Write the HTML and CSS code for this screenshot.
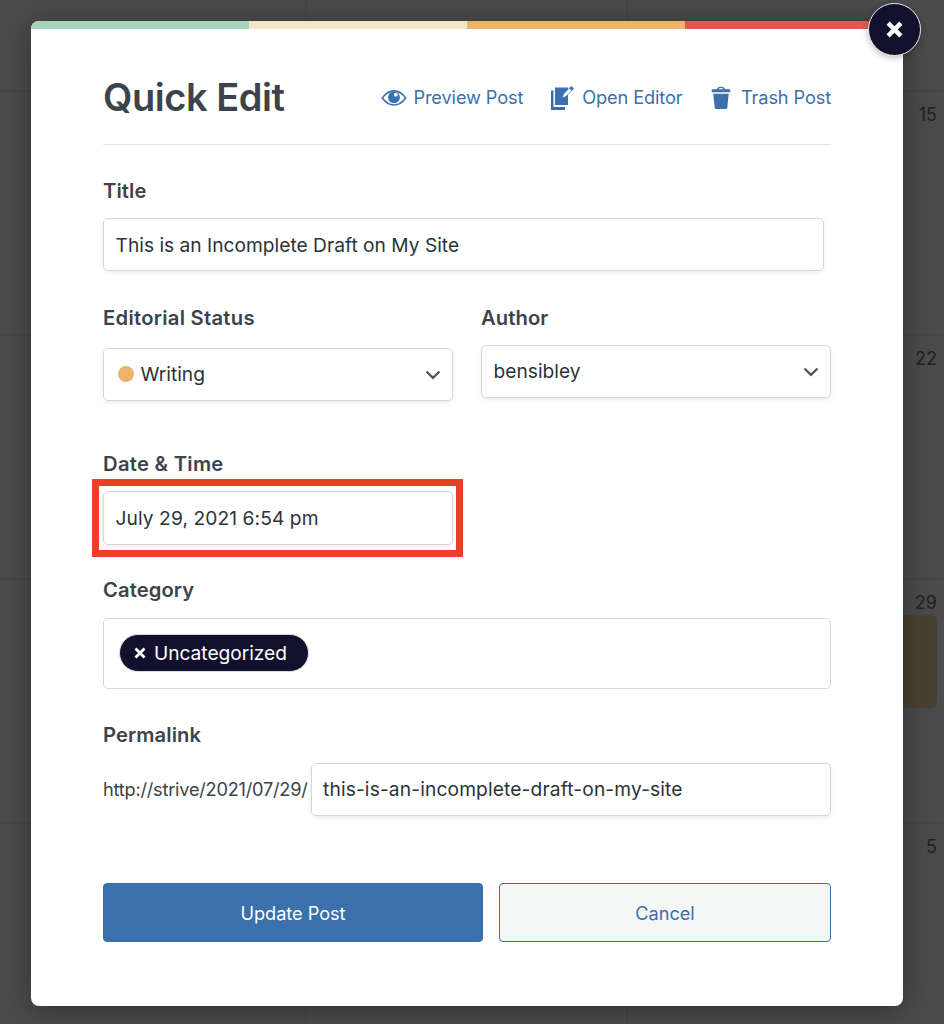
FILE: index.html
```html
<!DOCTYPE html>
<html lang="en">
<head>
<meta charset="utf-8">
<title>Quick Edit</title>
<link rel="stylesheet" href="styles.css">
</head>
<body>
<div class="screen">
  <div class="calendar">
    <div class="day"></div><div class="day"></div><div class="day"></div>
    <div class="day"></div><div class="day"></div><div class="day"><span class="date">15</span></div>
    <div class="day"></div><div class="day"></div><div class="day"><span class="date">22</span></div>
    <div class="day"></div><div class="day"></div><div class="day"><span class="date">29</span><div class="event"></div></div>
    <div class="day"></div><div class="day"></div><div class="day"><span class="date">5</span></div>
  </div>
  <main class="modal">
    <div class="stripes"><i class="green"></i><i class="cream"></i><i class="orange"></i><i class="red"></i></div>
    <button class="close" aria-label="Close"><svg width="17" height="17" viewBox="0 0 16 16"><path d="M2 2 14 14M14 2 2 14" stroke="#fff" stroke-width="4.200"/></svg></button>
    <div class="content">
      <header class="header">
        <h1 class="heading">Quick Edit</h1>
        <nav class="links">
          <a class="link preview"><svg width="26" height="18" viewBox="0 0 26 18"><path d="M1.300 9Q6.500 1.900 13 1.900T24.700 9Q19.500 16 13 16T1.300 9Z" fill="none" stroke="currentColor" stroke-width="1.600"/><circle cx="13" cy="8.300" r="5.900" fill="currentColor"/><circle cx="14.800" cy="5.700" r="1.900" fill="#fff"/></svg><span class="t-preview">Preview Post</span></a>
          <a class="link editor"><svg width="24" height="24" viewBox="0 0 24 24"><path d="M1 4.500H3.500V21H15V24H1Z" fill="currentColor"/><path d="M5 1.500H18V19H5Z" fill="currentColor"/><path d="M18.300 1.500 20.800 3.500V9L18.300 11Z" fill="#fff"/><path d="M13.300 10.800 14.500 7.500 21.400.8 23.200 2.600 16.500 9.500Z" fill="currentColor" stroke="currentColor" stroke-width="1.200" stroke-linejoin="round"/><path d="M12.600 11.600 13.900 7.900 19.400 2.600 21.500 4.700 16.100 10.100Z" fill="#fff"/></svg><span class="t-editor">Open Editor</span></a>
          <a class="link trash"><svg width="20" height="24" viewBox="0 0 20 24"><path d="M6.300 4Q6.800 1.400 10 1.400T13.700 4" fill="none" stroke="currentColor" stroke-width="1.400"/><path d="M.8 3.300H19.200V6.200H.8ZM2.300 7.700H17.700L16.300 21.500Q16.200 23 14.700 23H5.300Q3.800 23 3.700 21.500Z" fill="currentColor"/></svg><span class="t-trash">Trash Post</span></a>
        </nav>
      </header>
      <section class="field title">
        <label class="label l-title">Title</label>
        <div class="control short"><span class="t-title">This is an Incomplete Draft on My Site</span></div>
      </section>
      <div class="columns">
        <section class="field status">
          <label class="label l-status">Editorial Status</label>
          <div class="control"><i class="dot"></i><span class="t-writing">Writing</span><svg class="chevron" width="16" height="10" viewBox="0 0 16 10"><path d="m1.500 1.500 6.500 6.400 6.500-6.400" fill="none" stroke="#50575e" stroke-width="2.300"/></svg></div>
        </section>
        <section class="field">
          <label class="label l-author">Author</label>
          <div class="control"><span class="t-author">bensibley</span><svg class="chevron" width="16" height="10" viewBox="0 0 16 10"><path d="m1.500 1.500 6.500 6.400 6.500-6.400" fill="none" stroke="#50575e" stroke-width="2.300"/></svg></div>
        </section>
      </div>
      <section class="field datetime">
        <label class="label l-date">Date &amp; Time</label>
        <div class="control highlighted"><span class="t-date">July 29, 2021 6:54 pm</span></div>
      </section>
      <section class="field category">
        <label class="label l-category">Category</label>
        <div class="tags"><span class="tag"><svg width="12" height="12" viewBox="0 0 12 12"><path d="m1.500 1.500 9 9M10.500 1.500l-9 9" stroke="#fff" stroke-width="2.800"/></svg><span class="t-tag">Uncategorized</span></span></div>
      </section>
      <section class="field permalink">
        <label class="label l-permalink">Permalink</label>
        <div class="slug"><span class="base">http://strive/2021/07/29/</span><div class="control"><span class="t-slug">this-is-an-incomplete-draft-on-my-site</span></div></div>
      </section>
      <footer class="actions">
        <button class="button primary"><span class="t-update">Update Post</span></button>
        <button class="button secondary"><span class="t-cancel">Cancel</span></button>
      </footer>
    </div>
  </main>
</div>
</body>
</html>
```
FILE: styles.css
```css
* { box-sizing: border-box; }
body { margin: 0; font-family: Inter, "Liberation Sans", sans-serif; color: #3c434a; }
button { font: inherit; }
svg { display: block; flex: none; }
.screen { display: grid; width: 944px; height: 1024px; overflow: hidden; background: #4b4b4b; }
.calendar { grid-area: 1 / 1; display: grid; grid-template-columns: 307px 321px 321px; grid-template-rows: 92px repeat(4, 244px); width: 949px; }
.day { display: flex; flex-direction: column; align-items: flex-end; border-right: 2px solid #474747; border-bottom: 2px solid #464646; padding: 12px 10px 0 0; }
.date { font-size: 18px; line-height: 22px; color: #202224; }
.event { width: 290px; height: 93px; margin: 1px 0 0 0; border-radius: 6px; background: #4a4032; }
.modal { grid-area: 1 / 1; position: relative; width: 872px; height: 985px; margin: 21px 0 0 31px; background: #fff; border-radius: 8px; box-shadow: 0 4px 30px rgba(0, 0, 0, .35); }
.stripes { display: grid; grid-template-columns: repeat(4, 1fr); height: 8.400px; border-radius: 8px 8px 0 0; overflow: hidden; }
.green { background: #a6d3bd; }
.cream { background: #f1e7c3; }
.orange { background: #ebb56e; }
.red { background: #db5b4d; }
.close { position: absolute; top: -18px; right: -18px; width: 53px; height: 53px; display: grid; place-items: center; padding: 0; border: 1.500px solid #eee; border-radius: 50%; background: #12112d; box-shadow: 0 2px 6px rgba(0, 0, 0, .25); }
.content { padding: 0 72px; margin-top: -.400px; }
.header { display: flex; align-items: center; justify-content: space-between; height: 116px; padding-top: 21px; border-bottom: 1.500px solid #e2e4e4; }
.heading { margin: 0; font-size: 38px; line-height: 46px; font-weight: 600; letter-spacing: -.450px; white-space: nowrap; }
.links { display: flex; align-items: center; padding-top: 1px; }
.link { display: flex; align-items: center; font-size: 18.200px; color: #3b70ac; white-space: nowrap; letter-spacing: -.120px; }
.link span { padding-bottom: 2px; }
.preview { gap: 6px; }
.editor { gap: 8px; margin-left: 27px; }
.trash { gap: 9.500px; margin-left: 29px; }
.label { display: block; font-size: 20.200px; line-height: 24px; font-weight: 600; margin-bottom: 15px; letter-spacing: .100px; white-space: nowrap; }
.l-status { letter-spacing: .280px; }
.l-date { letter-spacing: .300px; }
.control { display: flex; align-items: center; height: 53px; padding: 0 11.500px; font-size: 19.200px; color: #2c3338; border: 1.500px solid #d4d6d8; border-radius: 5px; box-shadow: 0 2px 5px rgba(0, 0, 0, .07); white-space: nowrap; }
.t-title { padding-top: 1px; }
.t-writing, .t-author, .t-slug { padding-bottom: 2px; }
.t-date { letter-spacing: .080px; }
.t-slug { letter-spacing: .130px; }
.title { margin-top: 34px; }
.short { width: 721px; }
.columns { display: grid; grid-template-columns: 350px 350px; justify-content: space-between; margin-top: 35px; }
.status .label { margin-bottom: 18px; }
.dot { width: 16px; height: 16px; margin: 0 7px 2px 2px; border-radius: 50%; background: #ebb56e; }
.chevron { margin: 1px 0 0 auto; }
.datetime { width: 350px; margin-top: 51px; }
.highlighted { position: relative; height: 54px; }
.highlighted::after { content: ""; position: absolute; inset: -13px -11px -13px -12px; border: 7px solid #eb4025; }
.category { margin-top: 33px; }
.category .label, .permalink .label { margin-bottom: 16px; }
.tags { display: flex; align-items: center; height: 71px; padding: 0 15px; border: 1.500px solid #d4d6d8; border-radius: 5px; }
.tag { display: flex; align-items: center; gap: 8px; width: 190px; height: 38px; padding-left: 14px; margin-bottom: 2px; border: 1px solid #ddd; border-radius: 19px; background: #12112d; color: #fff; font-size: 19.200px; letter-spacing: -.050px; }
.permalink { margin-top: 34px; }
.slug { display: flex; align-items: center; }
.base { width: 208px; padding-bottom: 1px; font-size: 18.200px; letter-spacing: -.230px; white-space: nowrap; }
.slug .control { flex: 1; padding: 0 11px; }
.actions { display: grid; grid-template-columns: 380px 332px; justify-content: space-between; margin-top: 67px; }
.button { height: 59px; padding: 0; border: 1.500px solid #3b70ac; border-radius: 4px; font-size: 18.200px; letter-spacing: -.050px; }
.primary { background: #3b70ac; color: #fff; }
.secondary { background: #f5f7f7; color: #3b70ac; }
```
